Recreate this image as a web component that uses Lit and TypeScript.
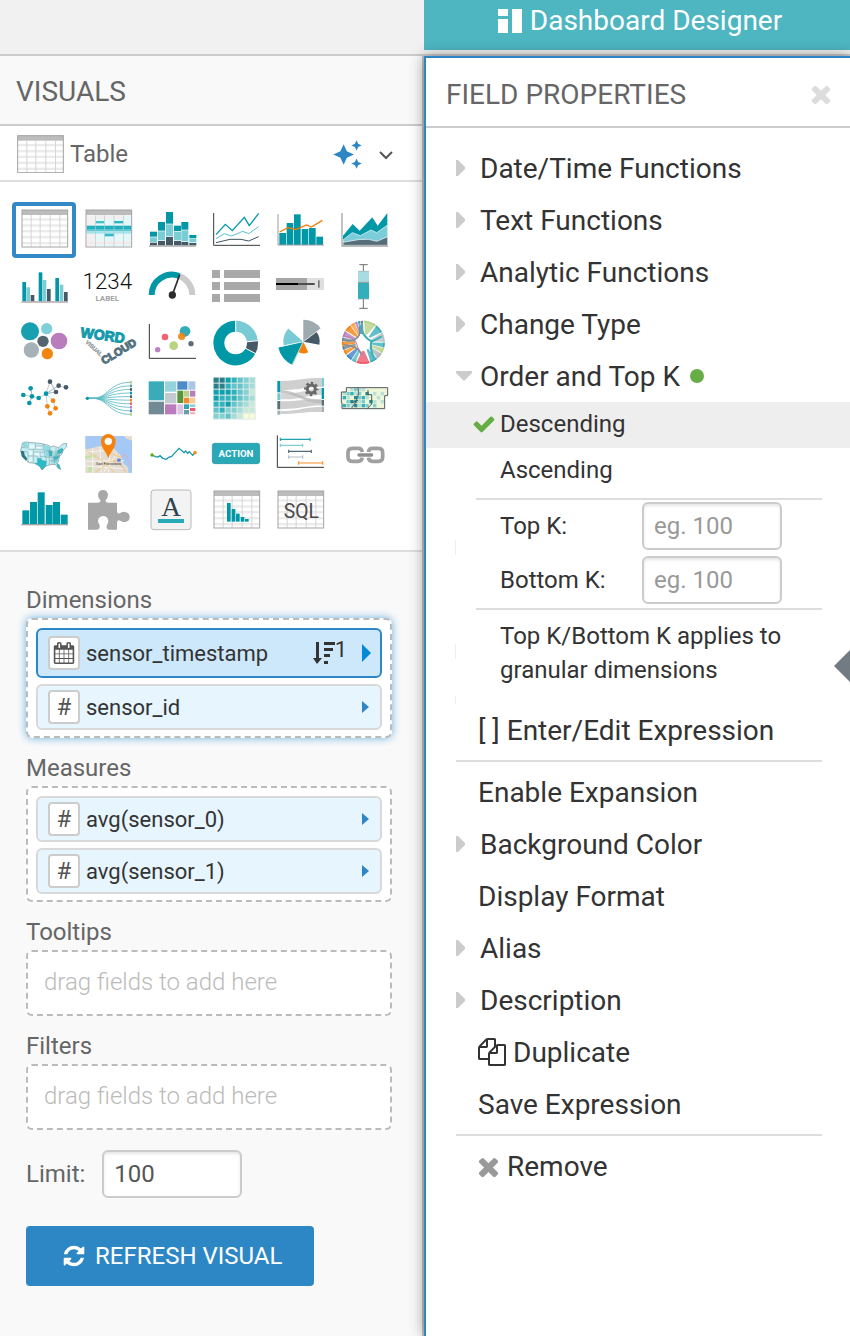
import { LitElement, html, svg, css } from "lit";
import { customElement, state } from "lit/decorators.js";
import { classMap } from "lit/directives/class-map.js";

const polar = (cx: number, cy: number, r: number, deg: number) => {
  const a = ((deg - 90) * Math.PI) / 180;
  return `${(cx + r * Math.cos(a)).toFixed(1)} ${(cy + r * Math.sin(a)).toFixed(1)}`;
};
const wedge = (cx: number, cy: number, r: number, from: number, to: number, fill: string) =>
  svg`<path fill=${fill} d=${`M${cx} ${cy}L${polar(cx, cy, r, from)}A${r} ${r} 0 ${to - from > 180 ? 1 : 0} 1 ${polar(cx, cy, r, to)}Z`}/>`;
const box = (x: number, y: number, w: number, h: number, fill: string) =>
  svg`<rect x=${x} y=${y} width=${w} height=${h} fill=${fill}/>`;
const dot = (x: number, y: number, r: number, fill: string, opacity = 1) =>
  svg`<circle cx=${x} cy=${y} r=${r} fill=${fill} fill-opacity=${opacity}/>`;
const line = (points: string, stroke: string, width = 3) =>
  svg`<polyline points=${points} fill="none" stroke=${stroke} stroke-width=${width}/>`;

const TEAL = "#0097a7";
const LIGHT = "#7accd5";
const SLATE = "#455a66";
const ORANGE = "#f58210";
const PURPLE = "#b97cbc";
const RED = "#ee5b6b";
const GREEN = "#b7d287";
const BLUE = "#3f82c4";

const sheet = (x: number, y: number) => svg`
  ${box(x, y, 137, 110, "#fff")}
  ${[29, 47, 64, 82, 100].map((d) => box(x, y + d - 4, 137, 7, "#ebebeb"))}
  ${[26, 53, 83, 112].map((d) => box(x + d, y + 15, 3, 95, "#d6d6d6"))}
  ${box(x, y, 137, 15, "#bcbcbc")}
  <rect x=${x} y=${y} width="137" height="111" fill="none" stroke="#a3a3a3" stroke-width="3"/>`;

interface Visual {
  name: string;
  origin: [number, number];
  art: unknown;
}

const heat = ["#2b7f86", "#0fa0ae", "#30b3bd", "#62c4ca", "#84d1d0", "#a5dcd6", "#c9e8d8", "#e6f1d6", "#f8fbd6"];
const heatRows = ["0012345", "0023345", "1112346", "1222345", "2213456", "3244566", "4435688", "3245888"];

const visuals: Visual[] = [
  { name: "Table", origin: [36, 36], art: sheet(66, 60) },
  {
    name: "Crosstab",
    origin: [228, 36],
    art: svg`
      ${box(258, 60, 137, 110, "#fff")}
      ${box(260, 76, 26, 92, "#f3f0f1")}${box(286, 76, 108, 92, "#e4f7f9")}
      ${box(286, 76, 84, 10, "#f3eeef")}${box(260, 154, 134, 9, "#f3eaec")}
      ${box(287, 93, 26, 7, "#45bfcc")}${box(342, 93, 27, 7, "#27b4c3")}
      ${box(260, 107, 134, 10, "#22b0be")}${box(260, 117, 134, 7, "#5cc8d4")}${box(260, 124, 134, 7, "#a5e4ec")}
      ${box(314, 131, 28, 8, "#36bac8")}
      ${[286, 313, 341, 369].map((x) => box(x, 76, 2, 94, "#b9c9cb"))}
      ${box(258, 60, 137, 15, "#bcbcbc")}
      <rect x="258" y="60" width="137" height="111" fill="none" stroke="#a3a3a3" stroke-width="3"/>`,
  },
  {
    name: "Stacked bars",
    origin: [420, 36],
    art: svg`
      ${[
        [450, 125, 142, 158], [474, 96, 124, 153], [498, 66, 103, 141],
        [522, 107, 125, 153], [544, 96, 121, 156], [568, 135, 147, 159],
      ].map(([x, a, b, c]) => svg`${box(x, a, 21, b - a - 2, TEAL)}${box(x, b, 21, c - b - 2, LIGHT)}${box(x, c, 21, 166 - c, SLATE)}`)}
      ${box(447, 166, 141, 4, "#a0a0a0")}`,
  },
  {
    name: "Lines",
    origin: [-3, 36],
    art: svg`
      ${line("33,134 61,103 82,122 118,82 133,107 161,70", TEAL, 4)}
      ${line("33,146 58,131 80,138 113,124 131,131 161,110", "#58bfca")}
      ${line("33,158 75,148 108,148 131,153 161,140", "#3d5563")}
      ${line("26,69 26,166 165,166", "#3a3a3a")}`,
  },
  {
    name: "Combo",
    origin: [189, 36],
    art: svg`
      ${[[223, 129], [245, 99], [267, 73], [290, 117], [312, 114], [334, 140]].map(([x, y]) => box(x, y, 20, 165 - y, TEAL))}
      ${line("224,126 249,113 272,119 305,105 319,111 352,91", "#f57c00", 4)}
      ${line("219,72 219,165 357,165", "#9b9b9b")}`,
  },
  {
    name: "Areas",
    origin: [381, 36],
    art: svg`
      <path fill=${TEAL} d="M414 137L443 102 464 122 502 82 518 107 547 69V165H414z"/>
      <path fill="#7acdd9" stroke="#fff" stroke-width="2" d="M414 150L442 128 466 137 498 120 515 128 548 105V166H414z"/>
      <path fill="#556c79" stroke="#fff" stroke-width="2" d="M414 157L460 149 490 148 516 154 548 140V166H414z"/>
      ${line("411,69 411,168 549,168", "#a4a4a4", 4)}`,
  },
  {
    name: "Grouped bars",
    origin: [36, 204],
    art: svg`
      ${[[67, 276, TEAL], [79, 292, LIGHT], [92, 315, SLATE], [116, 247, TEAL], [128, 270, LIGHT], [141, 297, SLATE], [166, 264, TEAL], [179, 284, LIGHT], [192, 306, SLATE]].map(
        ([x, y, f]) => box(x as number, y as number, 11, 334 - (y as number), f as string),
      )}
      ${box(64, 334, 140, 4, "#aaa0a2")}`,
  },
  {
    name: "KPI",
    origin: [228, 204],
    art: svg`
      <text x="322" y="296" class="thin" font-size="67" fill="#111">1234</text>
      <text x="322" y="332" class="strong" font-size="24" fill="#a3a3a3">LABEL</text>`,
  },
  {
    name: "Gauge",
    origin: [420, 204],
    art: svg`
      <path d="M455 315A61 61 0 0 1 538 258" fill="none" stroke=${TEAL} stroke-width="18"/>
      <path d="M538 258A61 61 0 0 1 577 315" fill="none" stroke="#cbcbcb" stroke-width="18"/>
      ${line("517,315 539,254", "#2c2c2c", 5)}${dot(517, 315, 11, "#2c2c2c")}`,
  },
  {
    name: "Field list",
    origin: [-3, 204],
    art: svg`${[240, 276, 312].map((y) => svg`${box(21, y, 24, 24, "#a9a9a9")}${box(57, y, 108, 24, "#a9a9a9")}`)}`,
  },
  {
    name: "Bullet",
    origin: [189, 204],
    art: svg`
      ${box(213, 264, 144, 36, "#dfdfdf")}${box(213, 264, 93, 36, "#a6a6a6")}
      ${box(213, 279, 116, 6, "#4d4d4d")}${box(213, 279, 66, 6, "#000")}${box(339, 271, 5, 22, "#777")}`,
  },
  {
    name: "Box plot",
    origin: [381, 204],
    art: svg`
      ${line("463,224 488,224", "#6f6f6f")}${line("463,355 488,355", "#6f6f6f")}${line("475,224 475,355", "#6f6f6f")}
      ${box(459, 243, 33, 34, "#a9dce2")}${box(459, 277, 33, 50, "#33afbc")}
      ${line("459,244 492,244", "#9eb5b8", 2)}${line("459,277 492,277", "#9e9e9e")}${line("459,327 492,327", "#8fa5a8", 2)}`,
  },
  {
    name: "Packed bubbles",
    origin: [36, 6],
    art: svg`${dot(90, 58, 27, "#16a0b0")}${dot(140, 50, 17, "#7fcfd8")}${dot(177, 87, 25, PURPLE)}${dot(129, 88, 17, "#53666f")}${dot(94, 114, 23, "#a7b2b8")}${dot(142, 125, 17, "#f2860f")}`,
  },
  {
    name: "Word cloud",
    origin: [228, 6],
    art: svg`
      <text transform="translate(306 84) rotate(8)" class="impact" font-size="42" stroke-width="3" fill="#149aab" stroke="#149aab">WORD</text>
      <text transform="translate(362 128) rotate(-31)" class="impact" font-size="33" stroke-width="3" fill="#53717e" stroke="#53717e">CLOUD</text>
      <text transform="translate(278 113) rotate(42)" class="impact" font-size="17" stroke-width="1" fill="#979fa3" stroke="#979fa3">VISUAL</text>`,
  },
  {
    name: "Scatter",
    origin: [420, 6],
    art: svg`
      ${dot(555, 58, 16, TEAL, 0.8)}${dot(545, 73, 11, "#f0820f", 0.88)}${dot(495, 75, 10, RED, 0.95)}${dot(521, 101, 13, "#b8d483")}${dot(573, 95, 8, "#5a6f7b")}${dot(473, 113, 8, "#bb82c4")}
      ${line("448,36 448,139 588,139", "#333")}`,
  },
  {
    name: "Donut",
    origin: [-3, 6],
    art: svg`
      ${wedge(92, 93, 67, 0, 84, "#78cbd4")}${wedge(92, 93, 67, 84, 118, SLATE)}${wedge(92, 93, 67, 118, 360, TEAL)}
      ${[0, 84, 118].map((d) => svg`<path stroke="#fff" stroke-width="3" d=${`M92 93L${polar(92, 93, 69, d)}`}/>`)}${dot(92, 93, 34, "#fff")}`,
  },
  {
    name: "Radial",
    origin: [189, 6],
    art: svg`
      ${wedge(295, 89, 66, 0, 53, "#9ea9b0")}${wedge(295, 89, 49, 53, 101, SLATE)}${wedge(295, 89, 35, 155, 208, "#f5800a")}
      ${wedge(295, 89, 77, 205, 257, TEAL)}${wedge(295, 89, 60, 259, 311, "#78cbd4")}
      ${[53, 206, 258].map((d) => svg`<path stroke="#fff" stroke-width="2" d=${`M295 89L${polar(295, 89, 78, d)}`}/>`)}`,
  },
  {
    name: "Chord",
    origin: [381, 6],
    art: svg`
      ${[
        [2, 36, GREEN], [38, 61, "#3aafba"], [63, 89, "#b4c2c7"], [91, 104, "#3aafba"], [106, 120, GREEN], [122, 138, "#a9b5ba"],
        [140, 160, "#38adb8"], [163, 199, RED], [201, 213, "#57bcc5"], [215, 232, BLUE], [235, 247, ORANGE], [249, 259, "#6c838d"],
        [261, 272, ORANGE], [274, 283, "#708890"], [285, 301, PURPLE], [304, 322, ORANGE], [324, 335, "#f79b42"], [337, 343, PURPLE], [345, 351, "#2ba8b5"], [353, 359, "#677d88"],
      ].map(([a, b, f]) => {
        const mid = ((a as number) + (b as number)) / 2;
        return svg`
          <path fill=${f as string} opacity=".8" d=${`M${polar(475, 91, 64, a as number)}A64 64 0 0 1 ${polar(475, 91, 64, b as number)}L${polar(475, 91, 24, mid + 6)}L${polar(475, 91, 24, mid - 6)}Z`}/>
          <path fill="none" stroke=${f as string} stroke-width="5" d=${`M${polar(475, 91, 62, a as number)}A62 62 0 0 1 ${polar(475, 91, 62, b as number)}`}/>`;
      })}
      <path fill="#fff" d="M463 66L482 67 499 83 495 102 479 118 461 114 454 97 458 78z"/>
      <path fill="none" stroke="#3aafba" stroke-width="6" d="M468 40Q470 72 499 88Q510 85 530 73M499 88Q494 108 506 137"/>
      <path fill="none" stroke="#7d8b92" stroke-width="5" d="M463 45Q470 74 448 83Q430 90 414 84M416 99Q456 98 470 128"/>
      <path fill="none" stroke=${PURPLE} stroke-width="3" d="M418 72Q452 78 455 96T487 143"/>`,
  },
  {
    name: "Network",
    origin: [36, 174],
    art: svg`
      ${line("70,249 96,253 92,229 96,253 88,273 96,253 116,258 138,245 150,209 168,240 150,209", "#a9b3b7", 2)}
      ${line("198,226 176,221 138,245 168,240 138,245 142,283 150,304 167,289 159,266 138,245 176,221", "#a9b3b7", 2)}
      ${[[70, 249], [92, 229], [96, 253], [88, 273], [116, 258], [138, 245]].map(([x, y]) => dot(x, y, 7, TEAL))}
      ${[[150, 209], [176, 221], [198, 226], [168, 240]].map(([x, y]) => dot(x, y, 7, SLATE))}
      ${[[159, 266], [167, 289], [142, 283], [150, 304]].map(([x, y]) => dot(x, y, 7, "#f5820b"))}`,
  },
  {
    name: "Dendrogram",
    origin: [228, 174],
    art: svg`
      ${[GREEN, "#4fa58b", SLATE, TEAL, "#4a5f6a", ORANGE, RED, PURPLE, BLUE, GREEN].map((f, i) => {
        const y = 211 + i * 10.7;
        return svg`<path fill="none" stroke="#5fbcc6" stroke-width="2.6" d=${`M262 259H278C325 259 325 ${y} 392 ${y}`}/>${box(390, y - 4, 6, 8, f)}`;
      })}
      ${dot(262, 259, 5, TEAL)}`,
  },
  {
    name: "Treemap",
    origin: [420, 174],
    art: svg`
      ${[
        [446, 208, 46, 57, "#3aabb8"], [446, 269, 46, 38, "#728a95"], [495, 208, 34, 31, "#97d3da"], [495, 243, 34, 31, "#c0cad0"], [495, 277, 34, 30, PURPLE],
        [532, 208, 30, 25, "#4d8bc8"], [565, 208, 21, 25, "#a9c7e5"], [532, 236, 18, 37, "#5b9438"], [532, 277, 18, 30, "#dcc4e1"],
        [552, 236, 16, 18, "#b8d08b"], [570, 236, 16, 18, "#b680bb"], [552, 257, 16, 17, "#f68b2e"], [570, 257, 16, 17, "#fbc896"],
        [552, 277, 15, 14, "#2fa4b3"], [552, 294, 15, 13, "#5fa2ae"], [570, 277, 16, 8, "#8ed1d6"], [570, 288, 16, 9, "#ee596b"], [570, 300, 16, 7, "#f9b7bf"],
      ].map(([x, y, w, h, f]) => box(x as number, y as number, w as number, h as number, f as string))}`,
  },
  {
    name: "Heat map",
    origin: [-3, 174],
    art: svg`${box(24, 195, 128, 128, "#dcebeb")}${heatRows.slice(0, 7).map((row, r) => [...row].map((v, c) => box(26 + c * 18, 197 + r * 18, 15, 15, heat[Number(v)])))}`,
  },
  {
    name: "Correlation flow",
    origin: [189, 174],
    art: svg`
      <g fill="#cfcfcf">
        <path d="M227 207C290 205 290 198 350 198V225C290 226 290 234 227 234z"/>
        <path opacity=".9" d="M227 244C290 246 290 234 350 228V248C300 250 290 263 227 262z"/>
        <path d="M227 268C280 268 300 262 350 262V280C300 282 280 292 227 291z"/>
        <path d="M227 296C270 300 300 284 350 284V300C300 298 270 306 227 306z"/>
      </g>
      <path fill="#b9b9b9" opacity=".8" d="M227 234C280 238 290 262 350 264V274C290 272 280 246 227 243z"/>
      ${box(217, 207, 9, 34, "#0897a7")}${box(217, 244, 9, 20, "#74c7d1")}${box(217, 267, 9, 25, "#5a6f7b")}${box(217, 296, 9, 12, "#a6aeb2")}
      ${box(350, 198, 7, 26, "#79ccd4")}${box(350, 228, 7, 33, TEAL)}${box(350, 264, 7, 17, "#5a6f7b")}${box(350, 284, 7, 16, "#a6b0b4")}
      <circle cx="319" cy="231" r="12" fill="none" stroke="#696969" stroke-width="9"/>
      <circle cx="319" cy="231" r="18" fill="none" stroke="#696969" stroke-width="7" stroke-dasharray="7.2 6.94" stroke-dashoffset="3.6"/>`,
  },
  {
    name: "Choropleth",
    origin: [381, 174],
    art: svg`
      <path fill="#eef6d9" d="M409 239L424 236V227H547V251H539V290H411V272z"/>
      ${["00121100000", "12312040101", "31042310010", "02431204101", "32141320200"].map((row, r) =>
        [...row].map((v, c) => (v === "0" ? "" : box(413 + c * 11.4, 228 + r * 12, 10, 10, ["", "#b6e0d9", "#7ccbcf", "#37b1b8", "#1f8b91"][Number(v)]))),
      )}
      <path fill="none" stroke="#555b5c" stroke-width="3" d="M409 240H424V227H548V251H539V290H411V272H409zM459 227Q466 256 440 288M489 234V248H500V276L487 290M459 265L440 272"/>`,
  },
  {
    name: "US map",
    origin: [36, 6],
    art: svg`
      <path fill="#c3eff4" stroke="#7f9297" stroke-width="2" d="M67 57L78 54 120 58 140 62 152 68 160 66 176 71 188 60 200 58 200 68 190 78 186 90 178 98 176 110 172 118 182 136 172 130 166 121 150 122 134 128 127 138 118 126 104 118 88 116 78 108 66 96 62 80 65 68z"/>
      <path fill="#8adce5" d="M68 57L80 56 84 68 68 70zM132 62L150 70 152 100 138 98zM160 88L178 84 174 116 158 118z"/>
      <path fill="#2cbac8" stroke="#6b9fa5" stroke-width="1" d="M112 103H124V108L140 112 138 126 126 138 118 126 104 118 112 116zM146 82L156 80 156 96 148 96zM172 80L186 72 190 78 184 88 172 90zM170 118L178 122 182 136 174 132zM162 98L178 96 172 106 160 106z"/>
      <path fill="#2a7680" d="M62 80L72 82 74 94 82 104 78 110 66 98z"/>
      <path fill="#e2fafc" d="M86 62L104 62V74L90 74zM108 66L124 66V76H108zM86 80H98V92H86zM104 84L120 86V96H104zM84 100H96V112H86z"/>
      <path fill="none" stroke="#83979b" stroke-width="1.5" d="M66 70L84 72 86 56M72 82L84 84 84 116M84 76L106 76 106 58M100 76V116M106 66H130M106 76H132M84 96H112V103M102 84H134M120 86V98H138M130 60L134 90 140 112M138 80H152M138 100H158M150 70V98M156 80V120M156 86L170 82M150 110H172M158 98L180 94M168 72V96M164 106V122M176 71L178 98M148 100V122"/>`,
  },
  {
    name: "Interactive map",
    origin: [228, 6],
    art: svg`
      ${box(256, 36, 140, 111, "#e4dcd0")}
      <path fill="#a5c8f6" d="M256 36H396V147H386L384 130 370 118 364 96 344 74 300 66 276 72 256 76z"/>
      <path fill="#e4dcd0" d="M370 36L380 44 396 50V36z"/>
      <path fill="#c2e2a2" d="M256 96L288 92V98L256 104zM266 130L280 126 278 142 262 144zM358 120L366 124 360 130z"/>
      <path fill="none" stroke="#fff" stroke-width="2" d="M258 84L340 78M258 112L372 110M278 74V146M300 68L304 146M256 126L370 134M330 80L326 146M350 90L310 146"/>
      <path fill="none" stroke="#f0c983" stroke-width="3" d="M262 82L300 106 344 146M316 84L366 100M286 146L330 112 366 106"/>
      <path fill="none" stroke="#f0a49a" stroke-width="2" d="M340 110L362 120 378 146M364 98L376 92 396 128"/>
      <text x="326" y="123" class="plain" font-size="12" fill="#333">San Francisco</text>
      ${box(352, 104, 10, 9, "#4f86d8")}
      <path fill="#f6820c" d="M325 103C318 82 303 72 303 52A22 22 0 0 1 347 52C347 72 332 82 325 103z"/>${dot(325, 52, 11, "#fff")}`,
  },
  {
    name: "Sparklines",
    origin: [420, 6],
    art: svg`${line("456,93 466,98 474,99 480,95 488,103 499,106 506,100 515,97 523,88 531,80 537,73 544,79 552,86 557,81 563,88 568,83 578,94 584,87", "#1698a8", 4)}${dot(456, 93, 5, "#5aa90f")}${dot(585, 86, 5, "#f5820b")}`,
  },
  {
    name: "Action button",
    origin: [-3, 6],
    art: svg`
      <rect x="22" y="58" width="142" height="61" rx="7" fill="#29a8b7" stroke="#1b8d9b" stroke-width="2"/>
      <text x="93" y="99" class="strong" font-size="29" fill="#fff">ACTION</text>`,
  },
  {
    name: "Timeline",
    origin: [189, 6],
    art: svg`
      ${[[226, 315, 46, "#21a0ae"], [226, 293, 64, "#80cfd6"], [251, 319, 82, "#546b77"], [251, 293, 99, "#b0bfc6"], [281, 353, 117, "#f78f2b"]].map(([a, b, y, f]) =>
        svg`<path fill="none" stroke=${f as string} stroke-width="3.5" d=${`M${a} ${y}H${b}M${a} ${(y as number) - 5}v10M${b} ${(y as number) - 5}v10`}/>`,
      )}
      ${line("217,34 217,130 357,130", "#333")}`,
  },
  {
    name: "Link",
    origin: [381, 6],
    art: svg`
      <g fill="none" stroke="#a0a0a0" stroke-width="11">
        <path d="M472 84Q470 73 460 73H442Q429 73 429 86V99Q429 112 442 112H460Q470 112 472 101"/>
        <path d="M490 84Q492 73 502 73H520Q533 73 533 86V99Q533 112 520 112H502Q492 112 490 101"/>
      </g>
      <path d="M462 93H500" stroke="#8f8f8f" stroke-width="10" stroke-linecap="round"/>`,
  },
  {
    name: "Histogram",
    origin: [36, 174],
    art: svg`${[[67, 259], [90, 234], [113, 205], [137, 243], [159, 234], [182, 272]].map(([x, y]) => box(x, y, 21, 300 - y, TEAL))}${box(64, 300, 140, 4, "#a3a3a3")}`,
  },
  {
    name: "Extension",
    origin: [228, 174],
    art: svg`<path fill="#a8a8a8" d="M264 236H292Q303 236 301 228Q294 222 294 212Q296 198 309 198Q322 198 324 212Q324 222 317 228Q315 236 326 236H351V258Q351 271 360 268Q366 262 374 264Q389 266 389 279Q389 292 375 294Q367 295 361 290Q351 286 351 299V317H328Q318 317 320 305Q325 298 325 290Q322 276 309 276Q296 277 294 290Q294 298 299 304Q301 317 290 317H264z"/>`,
  },
  {
    name: "Rich text",
    origin: [420, 174],
    art: svg`
      <rect x="453" y="198" width="120" height="119" rx="9" fill="#f3f3f3" stroke="#b9b9b9" stroke-width="3"/>
      <text x="513" y="275" class="serif" font-size="82" fill="#2f4450">A</text>${box(474, 285, 78, 12, "#27a9b8")}`,
  },
  {
    name: "Table with bars",
    origin: [-3, 174],
    art: svg`${sheet(27, 201)}${[[66, 237], [80, 255], [93, 269], [107, 279], [120, 285]].map(([x, y]) => box(x, y, 11, 293 - y, TEAL))}`,
  },
  {
    name: "SQL",
    origin: [189, 174],
    art: svg`${sheet(219, 201)}<text x="289" y="282" class="plain" font-size="58" fill="#4a4a4a">SQL</text>`,
  },
];

const glyph = (d: string) => html`<svg class="glyph" viewBox="0 0 1792 1792" aria-hidden="true"><path d=${d} /></svg>`;
const TIMES =
  "M1490 1322q0 40-28 68l-136 136q-28 28-68 28t-68-28l-294-294-294 294q-28 28-68 28t-68-28l-136-136q-28-28-28-68t28-68l294-294-294-294q-28-28-28-68t28-68l136-136q28-28 68-28t68 28l294 294 294-294q28-28 68-28t68 28l136 136q28 28 28 68t-28 68l-294 294 294 294q28 28 28 68z";
const CHECK =
  "M1671 566q0 40-28 68l-724 724-136 136q-28 28-68 28t-68-28l-136-136-362-362q-28-28-28-68t28-68l136-136q28-28 68-28t68 28l294 295 656-657q28-28 68-28t68 28l136 136q28 28 28 68z";
const REFRESH =
  "M1639 1056q0 5-1 7-64 268-268 434.5t-478 166.5q-146 0-282.5-55t-243.5-157l-129 129q-19 19-45 19t-45-19-19-45v-448q0-26 19-45t45-19h448q26 0 45 19t19 45-19 45l-137 137q71 66 161 102t187 36q134 0 250-65t186-179q11-17 53-117 8-23 30-23h192q13 0 22.5 9.5t9.5 22.5zm25-800v448q0 26-19 45t-45 19h-448q-26 0-45-19t-19-45 19-45l138-138q-148-137-349-137-134 0-250 65t-186 179q-11 17-53 117-8 23-30 23h-199q-13 0-22.5-9.5t-9.5-22.5v-7q65-268 270-434.5t480-166.5q146 0 284 55.5t245 156.5l130-129q19-19 45-19t45 19 19 45z";
const COPY =
  "M1696 384q40 0 68 28t28 68v1216q0 40-28 68t-68 28h-960q-40 0-68-28t-28-68v-288h-544q-40 0-68-28t-28-68v-672q0-40 20-88t48-76l408-408q28-28 76-48t88-20h416q40 0 68 28t28 68v328q68-40 128-40h416zm-544 213l-299 299h299v-299zm-640-384l-299 299h299v-299zm196 647l316-316v-416h-384v416q0 40-28 68t-68 28h-416v640h512v-256q0-40 20-88t48-76zm956 804v-1152h-384v416q0 40-28 68t-68 28h-416v640h896z";
const CALENDAR =
  "M192 1664h288v-288h-288v288zm352 0h320v-288h-320v288zm-352-352h288v-320h-288v320zm352 0h320v-320h-320v320zm-352-384h288v-288h-288v288zm736 736h320v-288h-320v288zm-384-736h320v-288h-320v288zm768 736h288v-288h-288v288zm-384-352h320v-320h-320v320zm-352-864v-288q0-13-9.5-22.5t-22.5-9.5h-64q-13 0-22.5 9.5t-9.5 22.5v288q0 13 9.5 22.5t22.5 9.5h64q13 0 22.5-9.5t9.5-22.5zm736 864h288v-320h-288v320zm-384-384h320v-288h-320v288zm384 0h288v-288h-288v288zm32-480v-288q0-13-9.5-22.5t-22.5-9.5h-64q-13 0-22.5 9.5t-9.5 22.5v288q0 13 9.5 22.5t22.5 9.5h64q13 0 22.5-9.5t9.5-22.5zm384-64v1280q0 52-38 90t-90 38h-1408q-52 0-90-38t-38-90v-1280q0-52 38-90t90-38h128v-96q0-66 47-113t113-47h64q66 0 113 47t47 113v96h384v-96q0-66 47-113t113-47h64q66 0 113 47t47 113v96h128q52 0 90 38t38 90z";

const shared = css`
  * {
    box-sizing: border-box;
  }
  button {
    font: inherit;
    color: inherit;
    background: none;
    border: 0;
    padding: 0;
    margin: 0;
    cursor: pointer;
    text-align: left;
  }
  input {
    font: inherit;
    color: #555;
    width: 140px;
    height: 48px;
    padding: 0 10px;
    border: 2px solid #ccc;
    border-radius: 6px;
    background: #fff;
    box-shadow: inset 0 2px 3px rgba(0, 0, 0, 0.1);
  }
  input::placeholder {
    color: #999;
    opacity: 1;
  }
  h2 {
    margin: 0;
    font-size: 28px;
    font-weight: 400;
    color: #666;
  }
  .glyph {
    fill: currentColor;
    display: block;
    flex: none;
  }
`;

interface Field {
  name: string;
  kind: "time" | "number";
  selected?: boolean;
  order?: number;
}

@customElement("visual-picker")
export class VisualPicker extends LitElement {
  @state() private current = 0;

  static styles = [
    shared,
    css`
      :host {
        display: block;
        background: #fff;
        border-bottom: 2px solid #ddd;
      }
      .current {
        display: flex;
        align-items: center;
        height: 56px;
        padding: 2px 27px 0 17px;
        border-bottom: 2px solid #ddd;
        font-size: 24px;
        color: #666;
      }
      .current .thumb {
        width: 47px;
        height: 38px;
        margin-right: 6px;
      }
      .grow {
        flex: 1;
      }
      .spark {
        display: block;
        width: 31px;
        height: 31px;
        fill: #2e87c5;
      }
      .chevron {
        display: block;
        width: 18px;
        height: 18px;
        margin-left: 14px;
        fill: none;
        stroke: #555;
        stroke-width: 2;
      }
      .grid {
        display: grid;
        grid-template-columns: repeat(auto-fill, 64px);
        grid-auto-rows: 56px;
        padding: 20px 12px 12px;
      }
      .cell {
        display: grid;
        border-radius: 4px;
      }
      .cell svg {
        grid-area: 1 / 1;
        width: 64px;
        height: 56px;
      }
      .cell.on {
        box-shadow: inset 0 0 0 4px #3389c6;
      }
      text {
        text-anchor: middle;
        font-family: Roboto, sans-serif;
      }
      .thin {
        font-weight: 300;
      }
      .plain {
        font-weight: 400;
      }
      .strong {
        font-weight: 700;
      }
      .impact {
        font-family: "Liberation Sans Narrow", "Liberation Sans", sans-serif;
        font-weight: 700;
      }
      .serif {
        font-family: "Liberation Serif", serif;
      }
    `,
  ];

  render() {
    return html`
      <div class="current">
        <svg class="thumb" viewBox="64 58 141 114" aria-hidden="true">${sheet(66, 60)}</svg>
        <span class="grow">${visuals[this.current].name}</span>
        <button aria-label="Suggested visuals">
          <svg class="spark" viewBox="0 0 24 24">
            <path
              d="M19 9l1.25-2.75L23 5l-2.75-1.25L19 1l-1.25 2.75L15 5l2.75 1.25L19 9zm-7.5.5L9 4 6.5 9.5 1 12l5.5 2.5L9 20l2.500-5.500L17 12l-5.500-2.500zM19 15l-1.25 2.75L15 19l2.75 1.25L19 23l1.25-2.75L23 19l-2.750-1.250L19 15z"
            />
          </svg>
        </button>
        <button aria-label="Collapse visuals">
          <svg class="chevron" viewBox="0 0 18 18"><path d="M3 7l6 6 6-6" /></svg>
        </button>
      </div>
      <div class="grid">
        ${visuals.map(
          (v, i) => html`<button
            class=${classMap({ cell: true, on: i === this.current })}
            aria-label=${v.name}
            @click=${() => (this.current = i)}
          >
            <svg viewBox=${`${v.origin[0]} ${v.origin[1]} 192 168`} aria-hidden="true">${v.art}</svg>
          </button>`,
        )}
      </div>
    `;
  }
}

@customElement("field-shelves")
export class FieldShelves extends LitElement {
  static styles = [
    shared,
    css`
      :host {
        display: block;
        padding: 30px 30px 50px 26px;
        font-size: 24px;
        color: #666;
      }
      h3 {
        margin: 0;
        font: inherit;
        line-height: 36px;
      }
      .shelf {
        margin-bottom: 12px;
        padding: 8px 8px 0;
        min-height: 66px;
        border: 2px dashed #bbb;
        border-radius: 6px;
        background: #fff;
      }
      .shelf.focus {
        box-shadow: 0 0 8px #66afe0;
      }
      .hint {
        padding: 0 8px;
        line-height: 44px;
        font-weight: 300;
        color: #bbb;
      }
      .chip {
        display: flex;
        align-items: center;
        width: 100%;
        height: 46px;
        margin-bottom: 6px;
        padding: 0 9px 0 10px;
        border: 2px solid #d9d9d9;
        border-radius: 6px;
        background: #e7f5fe;
        color: #333;
        font-size: 22px;
      }
      .chip.on {
        height: 50px;
        border-color: #2e87c5;
        background: #cde8fb;
      }
      .type {
        display: grid;
        place-items: center;
        width: 32px;
        height: 34px;
        margin-right: 6px;
        border: 2px solid #ccc;
        border-radius: 4px;
        background: #fff;
        color: #555;
        font-size: 24px;
      }
      .type .glyph {
        width: 22px;
        height: 22px;
      }
      .name {
        flex: 1;
      }
      .sort {
        width: 22px;
        height: 24px;
        fill: #333;
      }
      .order {
        align-self: flex-start;
        margin-right: 14px;
        line-height: 40px;
      }
      .arrow {
        width: 10px;
        height: 18px;
        fill: #2e87c5;
      }
      .on .arrow {
        fill: #0288d8;
      }
      .limit {
        display: flex;
        align-items: center;
        gap: 17px;
        margin: 20px 0 28px;
      }
      .refresh {
        display: inline-flex;
        align-items: center;
        gap: 9px;
        height: 60px;
        padding: 0 32px 0 36px;
        border-radius: 4px;
        background: #2e87c5;
        color: #fff;
      }
      .refresh .glyph {
        width: 24px;
        height: 24px;
      }
    `,
  ];

  private shelves: { title: string; focus?: boolean; fields: Field[] }[] = [
    {
      title: "Dimensions",
      focus: true,
      fields: [
        { name: "sensor_timestamp", kind: "time", selected: true, order: 1 },
        { name: "sensor_id", kind: "number" },
      ],
    },
    {
      title: "Measures",
      fields: [
        { name: "avg(sensor_0)", kind: "number" },
        { name: "avg(sensor_1)", kind: "number" },
      ],
    },
    { title: "Tooltips", fields: [] },
    { title: "Filters", fields: [] },
  ];

  private chip(f: Field) {
    return html`<button class=${classMap({ chip: true, on: !!f.selected })}>
      <span class="type">${f.kind === "time" ? glyph(CALENDAR) : "#"}</span>
      <span class="name">${f.name}</span>
      ${f.order
        ? html`<svg class="sort" viewBox="0 0 22 24" aria-hidden="true">
              <path d="M3 1H6V17H9L4 23L0 17H3zM11 1H22V4H11zM11 7H20V10H11zM11 13H17V16H11zM11 20H15V23H11z" />
            </svg>
            <span class="order">${f.order}</span>`
        : ""}
      <svg class="arrow" viewBox="0 0 10 18" aria-hidden="true">
        <path d=${f.selected ? "M1 0L10 9 1 18z" : "M1 3L8 9 1 15z"} />
      </svg>
    </button>`;
  }

  render() {
    return html`
      ${this.shelves.map(
        (s) => html`<section>
          <h3>${s.title}</h3>
          <div class=${classMap({ shelf: true, focus: !!s.focus })}>
            ${s.fields.length ? s.fields.map((f) => this.chip(f)) : html`<div class="hint">drag fields to add here</div>`}
          </div>
        </section>`,
      )}
      <div class="limit"><label for="limit">Limit:</label><input id="limit" type="text" value="100" /></div>
      <button class="refresh">${glyph(REFRESH)}REFRESH VISUAL</button>
    `;
  }
}

@customElement("field-properties")
export class FieldProperties extends LitElement {
  @state() private direction = "Descending";

  static styles = [
    shared,
    css`
      :host {
        display: block;
        position: relative;
        border: 2px solid #2e87c5;
        border-width: 2px 0 0 2px;
        background: #fff;
        box-shadow: 0 0 14px rgba(0, 0, 0, 0.4);
        color: #333;
        font-size: 28px;
      }
      header {
        display: flex;
        align-items: center;
        justify-content: space-between;
        height: 70px;
        padding: 4px 15px 0 20px;
        border-bottom: 2px solid #ccc;
      }
      .close {
        color: #ddd;
      }
      .close .glyph {
        width: 28px;
        height: 28px;
      }
      .menu {
        padding: 14px 28px 20px 30px;
      }
      .item {
        display: flex;
        align-items: center;
        width: 100%;
        height: 52px;
        padding-left: 22px;
      }
      .item.branch {
        padding-left: 0;
      }
      .caret {
        width: 16px;
        height: 18px;
        margin-right: 8px;
        fill: #ccc;
      }
      .dot {
        width: 14px;
        height: 14px;
        margin-left: 10px;
        border-radius: 50%;
        background: #67ad45;
      }
      .copy .glyph {
        width: 28px;
        height: 28px;
        margin-right: 7px;
      }
      .item.remove {
        padding-left: 18px;
      }
      .remove .glyph {
        width: 29px;
        height: 29px;
        margin-right: 4px;
        color: #999;
      }
      hr {
        height: 2px;
        margin: 4px 0;
        border: 0;
        background: #ddd;
      }
      .sub {
        margin: 0 -28px 0 -30px;
        font-size: 24px;
        background:
          linear-gradient(#eee, #eee) 29px 138px / 1px 15px no-repeat,
          linear-gradient(#eee, #eee) 29px 242px / 1px 15px no-repeat,
          linear-gradient(#eee, #eee) 29px 294px / 1px 8px no-repeat;
      }
      .sub hr {
        margin: 4px 28px 2px 50px;
      }
      .choice {
        display: flex;
        align-items: center;
        width: 100%;
        height: 46px;
        padding: 0 0 2px 74px;
      }
      .choice.on {
        padding-left: 46px;
        background: #eee;
      }
      .choice .glyph {
        width: 24px;
        height: 24px;
        margin-right: 4px;
        color: #67ad45;
      }
      .pair {
        display: grid;
        grid-template-columns: 142px 140px;
        align-items: center;
        height: 48px;
        margin: 0 0 6px 74px;
      }
      .pair:last-of-type {
        margin-bottom: 0;
      }
      .note {
        margin: 0;
        padding: 7px 60px 17px 74px;
        line-height: 34px;
      }
      .handle {
        position: absolute;
        right: 0;
        top: 592px;
        width: 16px;
        height: 32px;
        fill: #737b82;
      }
    `,
  ];

  private branch(label: string, open = false) {
    return html`<button class="item branch" aria-expanded=${open ? "true" : "false"}>
      <svg class="caret" viewBox="0 0 16 18" aria-hidden="true">
        <path d=${open ? "M0 4H16V6L8 14 0 6z" : "M0 1H2L9 8V10L2 17H0z"} />
      </svg>
      ${label}${open ? html`<span class="dot"></span>` : ""}
    </button>`;
  }

  render() {
    return html`
      <header>
        <h2>FIELD PROPERTIES</h2>
        <button class="close" aria-label="Close">${glyph(TIMES)}</button>
      </header>
      <div class="menu">
        ${["Date/Time Functions", "Text Functions", "Analytic Functions", "Change Type"].map((l) => this.branch(l))}
        ${this.branch("Order and Top K", true)}
        <div class="sub">
          ${["Descending", "Ascending"].map(
            (d) => html`<button
              class=${classMap({ choice: true, on: d === this.direction })}
              @click=${() => (this.direction = d)}
            >
              ${d === this.direction ? glyph(CHECK) : ""}${d}
            </button>`,
          )}
          <hr />
          <div class="pair"><label for="top">Top K:</label><input id="top" type="text" placeholder="eg. 100" /></div>
          <div class="pair"><label for="bottom">Bottom K:</label><input id="bottom" type="text" placeholder="eg. 100" /></div>
          <hr />
          <p class="note">Top K/Bottom K applies to granular dimensions</p>
        </div>
        <button class="item">[ ] Enter/Edit Expression</button>
        <hr />
        <button class="item">Enable Expansion</button>
        ${this.branch("Background Color")}
        <button class="item">Display Format</button>
        ${this.branch("Alias")} ${this.branch("Description")}
        <button class="item copy">${glyph(COPY)}Duplicate</button>
        <button class="item">Save Expression</button>
        <hr />
        <button class="item remove">${glyph(TIMES)}Remove</button>
      </div>
      <svg class="handle" viewBox="0 0 16 32" aria-hidden="true"><path d="M16 0L0 16 16 32z" /></svg>
    `;
  }
}

@customElement("app-root")
export class AppRoot extends LitElement {
  static styles = [
    shared,
    css`
      :host {
        display: grid;
        grid-template-columns: minmax(0, 1fr) minmax(0, 1fr);
        grid-template-rows: 56px 1fr;
        min-height: 100vh;
        background: #f9f9f9;
        font-family: Roboto, sans-serif;
      }
      .bar {
        grid-column: 1 / -1;
        display: grid;
        grid-template-columns: subgrid;
        background: #f1f1f1;
        border-bottom: 2px solid #ccc;
      }
      .mode {
        grid-column: 2;
        display: flex;
        align-items: center;
        justify-content: center;
        gap: 8px;
        height: 50px;
        margin-left: -1px;
        padding: 0 0 9px 6px;
        background: #4db6c1;
        color: #fff;
        font-size: 28px;
        text-decoration: none;
      }
      .mode svg {
        width: 24px;
        height: 24px;
        fill: #fff;
      }
      .side {
        border-right: 2px solid #c4c4c4;
        margin-right: 1px;
      }
      .side h2 {
        line-height: 68px;
        padding: 2px 16px 0;
        height: 70px;
        border-bottom: 2px solid #ccc;
      }
      field-properties {
        margin-left: -1px;
      }
    `,
  ];

  render() {
    return html`
      <div class="bar">
        <a class="mode" href="#designer">
          <svg viewBox="0 0 24 24" aria-hidden="true"><path d="M0 0H10V7H0zM0 10H10V24H0zM14 0H24V24H14z" /></svg>Dashboard
          Designer
        </a>
      </div>
      <main class="side">
        <h2>VISUALS</h2>
        <visual-picker></visual-picker>
        <field-shelves></field-shelves>
      </main>
      <field-properties></field-properties>
    `;
  }
}
